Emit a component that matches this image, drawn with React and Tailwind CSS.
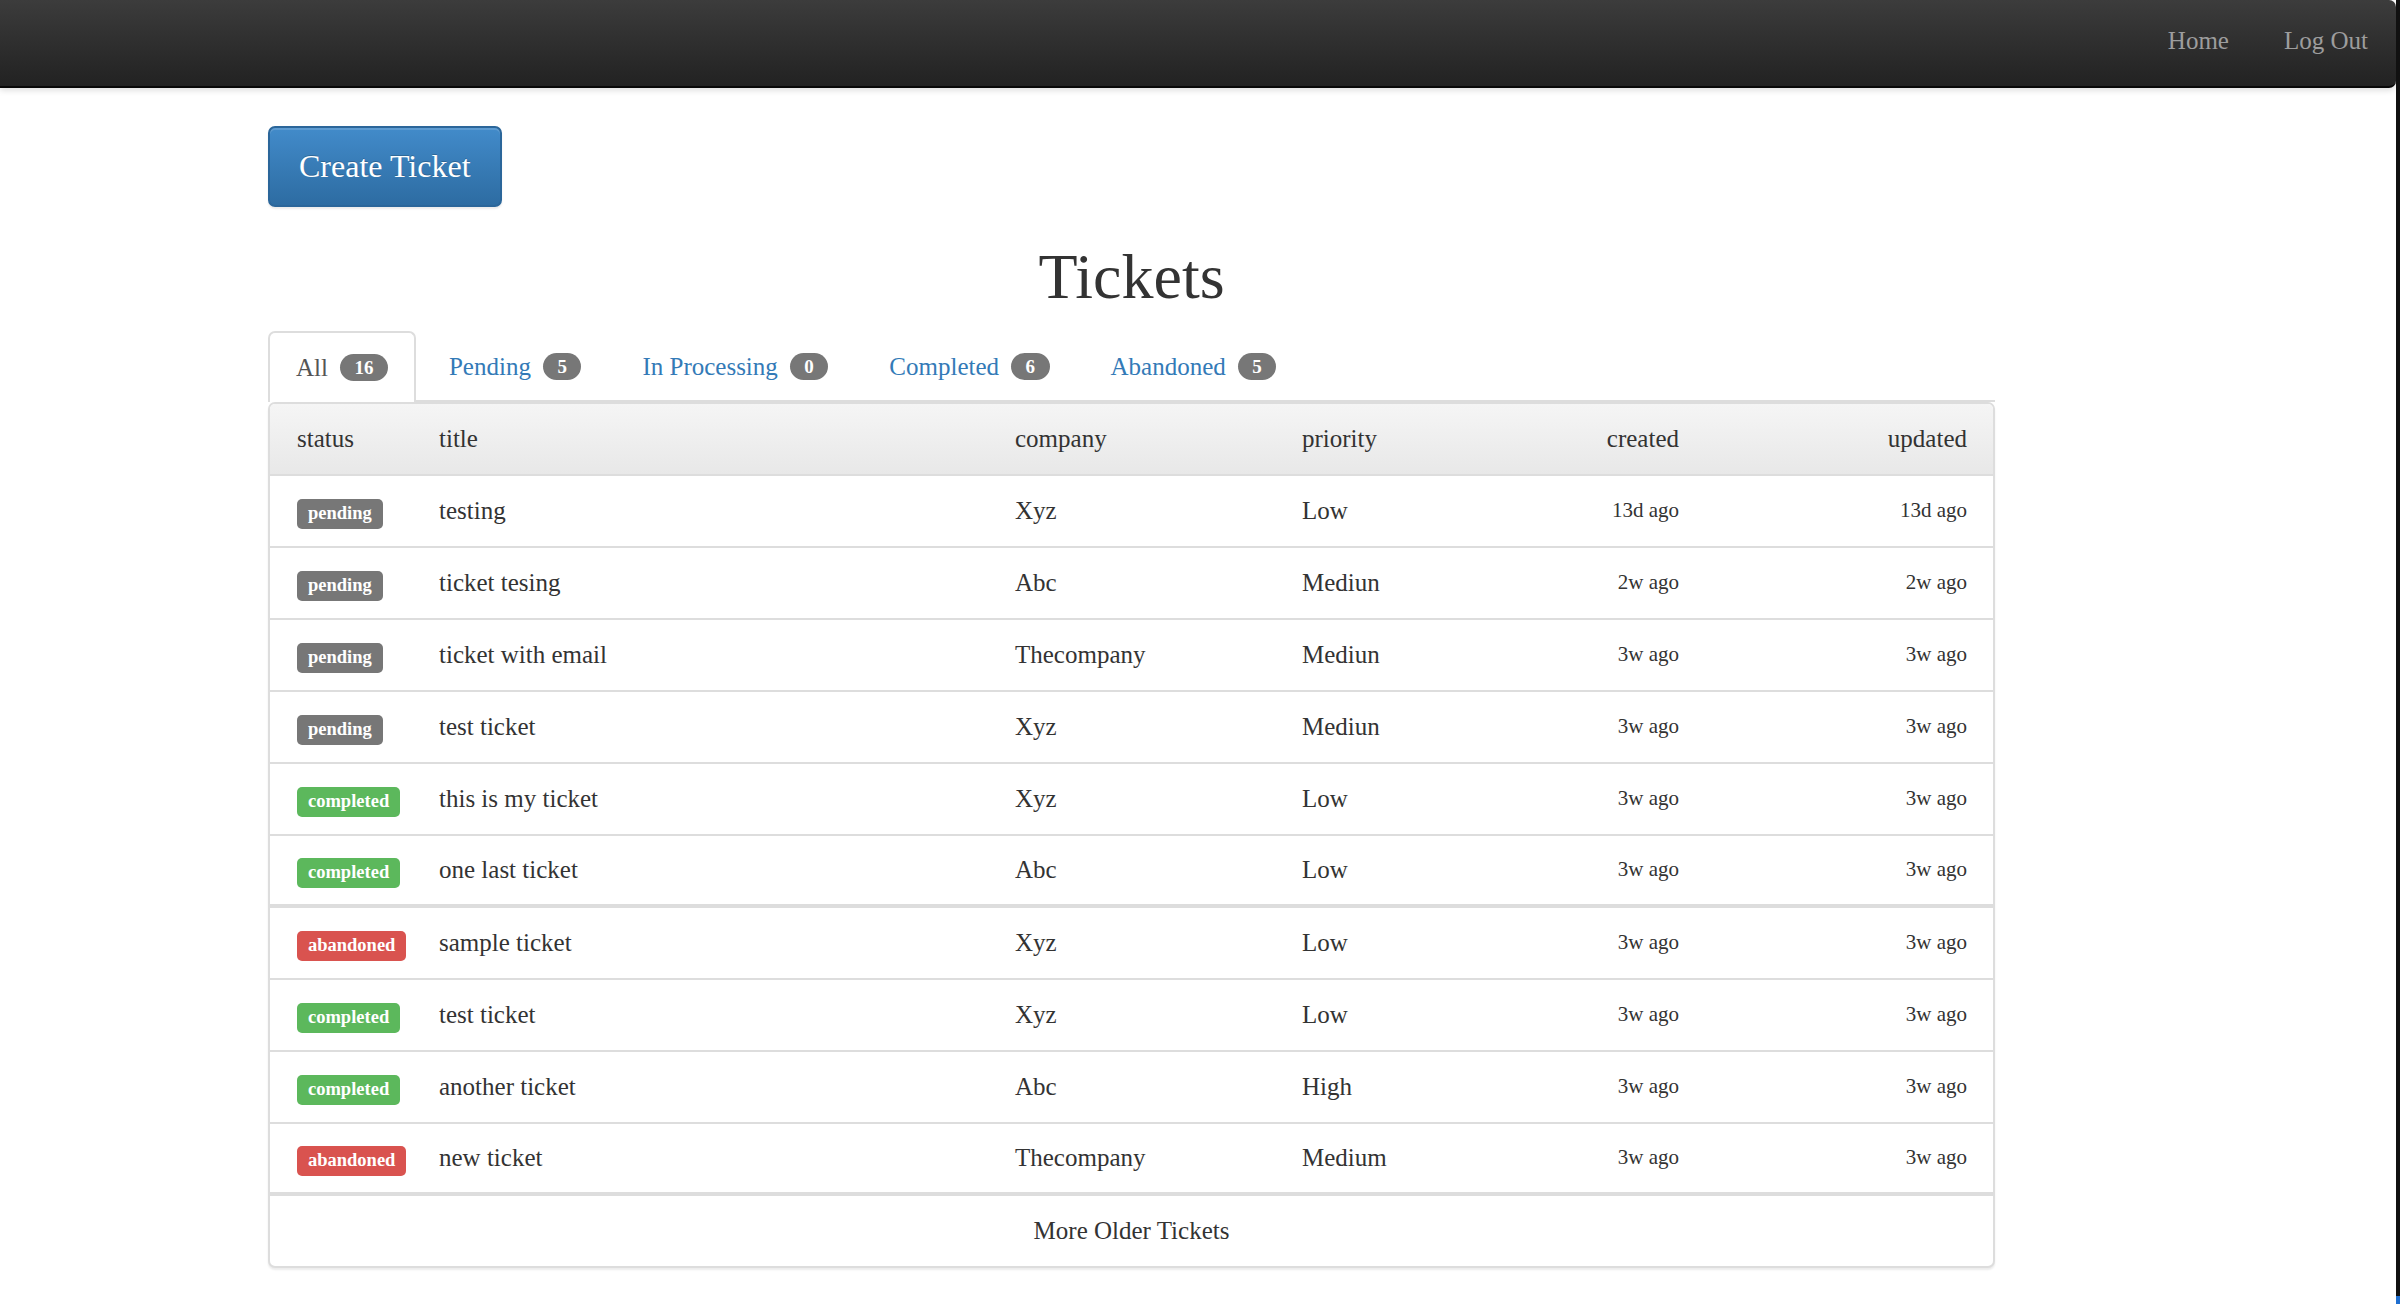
import React from "react";

const rows = [
  { s: "pending", t: "testing", c: "Xyz", p: "Low", cr: "13d ago", up: "13d ago" },
  { s: "pending", t: "ticket tesing", c: "Abc", p: "Mediun", cr: "2w ago", up: "2w ago" },
  { s: "pending", t: "ticket with email", c: "Thecompany", p: "Mediun", cr: "3w ago", up: "3w ago" },
  { s: "pending", t: "test ticket", c: "Xyz", p: "Mediun", cr: "3w ago", up: "3w ago" },
  { s: "completed", t: "this is my ticket", c: "Xyz", p: "Low", cr: "3w ago", up: "3w ago" },
  { s: "completed", t: "one last ticket", c: "Abc", p: "Low", cr: "3w ago", up: "3w ago", thick: true },
  { s: "abandoned", t: "sample ticket", c: "Xyz", p: "Low", cr: "3w ago", up: "3w ago" },
  { s: "completed", t: "test ticket", c: "Xyz", p: "Low", cr: "3w ago", up: "3w ago" },
  { s: "completed", t: "another ticket", c: "Abc", p: "High", cr: "3w ago", up: "3w ago" },
  { s: "abandoned", t: "new ticket", c: "Thecompany", p: "Medium", cr: "3w ago", up: "3w ago", thick: true },
];

const labelBg = {
  pending: "bg-[#777777]",
  completed: "bg-[#5cb85c]",
  abandoned: "bg-[#d9534f]",
};

const tabs = [
  { name: "All", n: 16, active: true },
  { name: "Pending", n: 5 },
  { name: "In Processing", n: 0 },
  { name: "Completed", n: 6 },
  { name: "Abandoned", n: 5 },
];

const gridCols = "grid grid-cols-[142px_576px_287px_200px_231px_1fr] items-center";

export default function App() {
  return (
    <div className="flex h-[1304px] w-full overflow-hidden bg-white font-['Liberation_Serif',serif] text-[#333]">
      <div className="flex min-w-0 flex-1 flex-col">
        <nav className="flex h-[88px] items-center justify-end gap-[55px] rounded-br-[7px] rounded-tr-[7px] border-b-2 border-[#080808] bg-linear-to-b from-[#3c3c3c] to-[#222222] pb-[5px] pr-[28px] text-[25px] text-[#9d9d9d] shadow-[0_2px_6px_rgba(0,0,0,0.15)]">
          <span>Home</span>
          <span>Log Out</span>
        </nav>

        <div className="pl-[268px] pt-[38px]">
          <div className="w-[1727px]">
            <div>
              <button className="rounded-[7px] border-2 border-[#2b669a] bg-linear-to-b from-[#428bca] to-[#2d6ca2] px-[29px] py-[17px] text-[32px] leading-[43px] text-white shadow-[inset_0_2px_0_rgba(255,255,255,0.15),0_2px_2px_rgba(0,0,0,0.08)] [text-shadow:0_-1px_0_rgba(0,0,0,0.2)]">
                Create Ticket
              </button>
            </div>

            <h1 className="mb-[19px] mt-[35px] h-[70px] text-center text-[64px] font-normal leading-[70px] text-[#333]">
              Tickets
            </h1>

            <div className="flex h-[71px] items-start border-b-2 border-[#dddddd]">
              {tabs.map((tab) => (
                <div
                  key={tab.name}
                  className={
                    tab.active
                      ? "-mb-[2px] mr-[5px] flex h-[71px] items-center rounded-t-[7px] border-2 border-b-0 border-[#dddddd] bg-white px-[26px] text-[25px] text-[#555555]"
                      : "mr-[5px] flex h-[69px] items-center border-2 border-b-0 border-transparent px-[26px] text-[25px] text-[#337ab7]"
                  }
                >
                  <span>{tab.name}</span>
                  <span className="ml-[12px] flex h-[27px] items-center rounded-full bg-[#777777] px-[14.5px] text-[19px] font-bold leading-none text-white">
                    {tab.n}
                  </span>
                </div>
              ))}
            </div>

            <div className="overflow-hidden rounded-[7px] border-2 border-[#dddddd] bg-white shadow-[0_2px_2px_rgba(0,0,0,0.08)]">
              <div className={`${gridCols} h-[72px] border-b-2 border-[#dddddd] bg-linear-to-b from-[#f5f5f5] to-[#e8e8e8] text-[25px]`}>
                <div className="pl-[27px]">status</div>
                <div className="pl-[27px]">title</div>
                <div className="pl-[27px]">company</div>
                <div className="pl-[27px]">priority</div>
                <div className="pr-[27px] text-right">created</div>
                <div className="pr-[26px] text-right">updated</div>
              </div>

              {rows.map((r, i) => (
                <div
                  key={i}
                  className={`${gridCols} h-[72px] border-[#dddddd] text-[25px] ${r.thick ? "border-b-4" : "border-b-2"}`}
                >
                  <div className="pl-[27px]">
                    <span className={`inline-flex h-[30px] items-center rounded-[5px] px-[11px] text-[18.5px] font-bold leading-none text-white ${labelBg[r.s]}`}>
                      {r.s}
                    </span>
                  </div>
                  <div className="pl-[27px]">{r.t}</div>
                  <div className="pl-[27px]">{r.c}</div>
                  <div className="pl-[27px]">{r.p}</div>
                  <div className="pr-[27px] text-right text-[21px]">{r.cr}</div>
                  <div className="pr-[26px] text-right text-[21px]">{r.up}</div>
                </div>
              ))}

              <div className="flex h-[70px] items-center justify-center text-[25px]">
                More Older Tickets
              </div>
            </div>
          </div>
        </div>
      </div>
      <div className="flex w-[4px] flex-col">
        <div className="flex-1 bg-[#111111]" />
        <div className="h-[8px] bg-[#1f6fd0]" />
      </div>
    </div>
  );
}
